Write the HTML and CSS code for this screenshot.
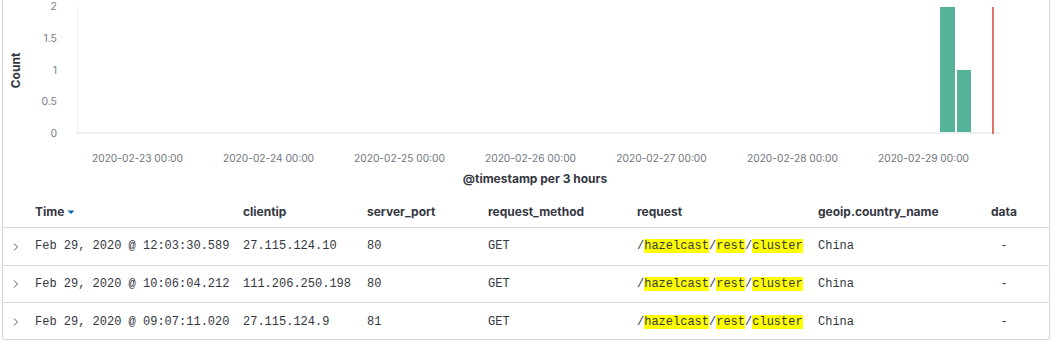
FILE: index.html
```html
<!DOCTYPE html>
<html>
<head>
<meta charset="utf-8">
<link rel="stylesheet" href="styles.css">
</head>
<body>
<div class="panel">
  <div class="chart">
    <div class="y-title"><span>Count</span></div>
    <div class="y-ticks">
      <span>2</span><span>1.5</span><span>1</span><span>0.5</span><span>0</span>
    </div>
    <div class="plot">
      <div class="bar bar-a"></div>
      <div class="bar bar-b"></div>
      <div class="now-line"></div>
    </div>
  </div>
  <div class="x-ticks">
    <span>2020-02-23 00:00</span>
    <span>2020-02-24 00:00</span>
    <span>2020-02-25 00:00</span>
    <span>2020-02-26 00:00</span>
    <span>2020-02-27 00:00</span>
    <span>2020-02-28 00:00</span>
    <span>2020-02-29 00:00</span>
  </div>
  <div class="x-title">@timestamp per 3 hours</div>

  <div class="table">
    <div class="row head">
      <div></div>
      <div class="th">Time <svg class="sort" width="8" height="6" viewBox="0 0 8 6"><path d="M0.5 1.5h7L4 5z" fill="#006bb4"/></svg></div>
      <div class="th">clientip</div>
      <div class="th">server_port</div>
      <div class="th">request_method</div>
      <div class="th">request</div>
      <div class="th">geoip.country_name</div>
      <div class="th center">data</div>
    </div>
    <div class="row">
      <div class="toggle"><svg width="8" height="10" viewBox="0 0 8 10"><path d="M2 1.5L5.5 5 2 8.5" fill="none" stroke="#535966" stroke-width="1"/></svg></div>
      <div class="td">Feb 29, 2020 @ 12:03:30.589</div>
      <div class="td">27.115.124.10</div>
      <div class="td">80</div>
      <div class="td">GET</div>
      <div class="td">/<mark>hazelcast</mark>/<mark>rest</mark>/<mark>cluster</mark></div>
      <div class="td">China</div>
      <div class="td center">-</div>
    </div>
    <div class="row">
      <div class="toggle"><svg width="8" height="10" viewBox="0 0 8 10"><path d="M2 1.5L5.5 5 2 8.5" fill="none" stroke="#535966" stroke-width="1"/></svg></div>
      <div class="td">Feb 29, 2020 @ 10:06:04.212</div>
      <div class="td">111.206.250.198</div>
      <div class="td">80</div>
      <div class="td">GET</div>
      <div class="td">/<mark>hazelcast</mark>/<mark>rest</mark>/<mark>cluster</mark></div>
      <div class="td">China</div>
      <div class="td center">-</div>
    </div>
    <div class="row last">
      <div class="toggle"><svg width="8" height="10" viewBox="0 0 8 10"><path d="M2 1.5L5.5 5 2 8.5" fill="none" stroke="#535966" stroke-width="1"/></svg></div>
      <div class="td">Feb 29, 2020 @ 09:07:11.020</div>
      <div class="td">27.115.124.9</div>
      <div class="td">81</div>
      <div class="td">GET</div>
      <div class="td">/<mark>hazelcast</mark>/<mark>rest</mark>/<mark>cluster</mark></div>
      <div class="td">China</div>
      <div class="td center">-</div>
    </div>
  </div>
</div>
</body>
</html>
```

FILE: styles.css
```css
html, body {
  margin: 0;
  padding: 0;
  background: #fff;
}
body {
  font-family: Inter, "Noto Sans", sans-serif;
  color: #343741;
}
.panel {
  margin-left: 2px;
  width: 1048px;
  height: 340px;
  box-sizing: border-box;
  border: 1px solid #d3dae6;
  border-top: none;
  border-radius: 0 0 4px 4px;
  box-shadow: 0 1px 2px rgba(152, 162, 179, 0.25);
  overflow: hidden;
}
.chart {
  display: flex;
  height: 141px;
}
.y-title {
  width: 26px;
  display: flex;
  align-items: center;
  justify-content: center;
}
.y-title span {
  transform: rotate(-90deg);
  font-size: 12px;
  font-weight: 700;
  color: #343741;
  white-space: nowrap;
}
.y-ticks {
  width: 28px;
  display: flex;
  flex-direction: column;
  justify-content: space-between;
  align-items: flex-end;
  font-size: 10.5px;
  line-height: 14px;
  color: #7a808c;
}
.plot {
  position: relative;
  margin-left: 20px;
  margin-top: 7px;
  width: 923px;
  height: 127px;
  box-sizing: border-box;
  border-left: 1px solid #eef0f3;
  border-bottom: 2px solid #eff0f2;
}
.bar {
  position: absolute;
  bottom: 0;
  background: #54b399;
}
.bar-a {
  left: 862px;
  width: 15px;
  top: 0;
}
.bar-b {
  left: 879px;
  width: 14px;
  top: 63px;
}
.now-line {
  position: absolute;
  left: 914px;
  top: 0;
  bottom: -2px;
  width: 2px;
  background: #e0736a;
}
.x-ticks {
  display: flex;
  margin-top: 10px;
  padding-left: 69px;
  font-size: 10.2px;
  line-height: 14px;
  color: #6f7580;
}
.x-ticks span {
  width: 131px;
  text-align: center;
  flex: none;
}
.x-title {
  margin-top: 7px;
  margin-left: 74px;
  width: 916px;
  text-align: center;
  font-size: 12px;
  font-weight: 700;
  line-height: 14px;
  color: #343741;
}
.table {
  margin-top: 9px;
}
.row {
  display: grid;
  grid-template-columns: 32px 208px 124px 121px 149px 181px 157px 58px;
  align-items: center;
  height: 37.5px;
  box-sizing: border-box;
  border-bottom: 1px solid #d3dae6;
}
.row.head {
  height: 33px;
}
.row.last {
  border-bottom: none;
}
.th {
  font-size: 12px;
  font-weight: 700;
  color: #343741;
  white-space: nowrap;
  display: flex;
  align-items: center;
  gap: 3px;
}
.th.center {
  justify-content: center;
}
.sort {
  margin-top: 1px;
}
.td {
  font-family: "Liberation Mono", "DejaVu Sans Mono", monospace;
  font-size: 12px;
  color: #343741;
  white-space: nowrap;
}
.td.center {
  text-align: center;
}
.toggle {
  display: flex;
  justify-content: flex-start;
  padding-left: 9px;
  padding-top: 1px;
}
mark {
  background: #ffff00;
  color: #343741;
}
```
